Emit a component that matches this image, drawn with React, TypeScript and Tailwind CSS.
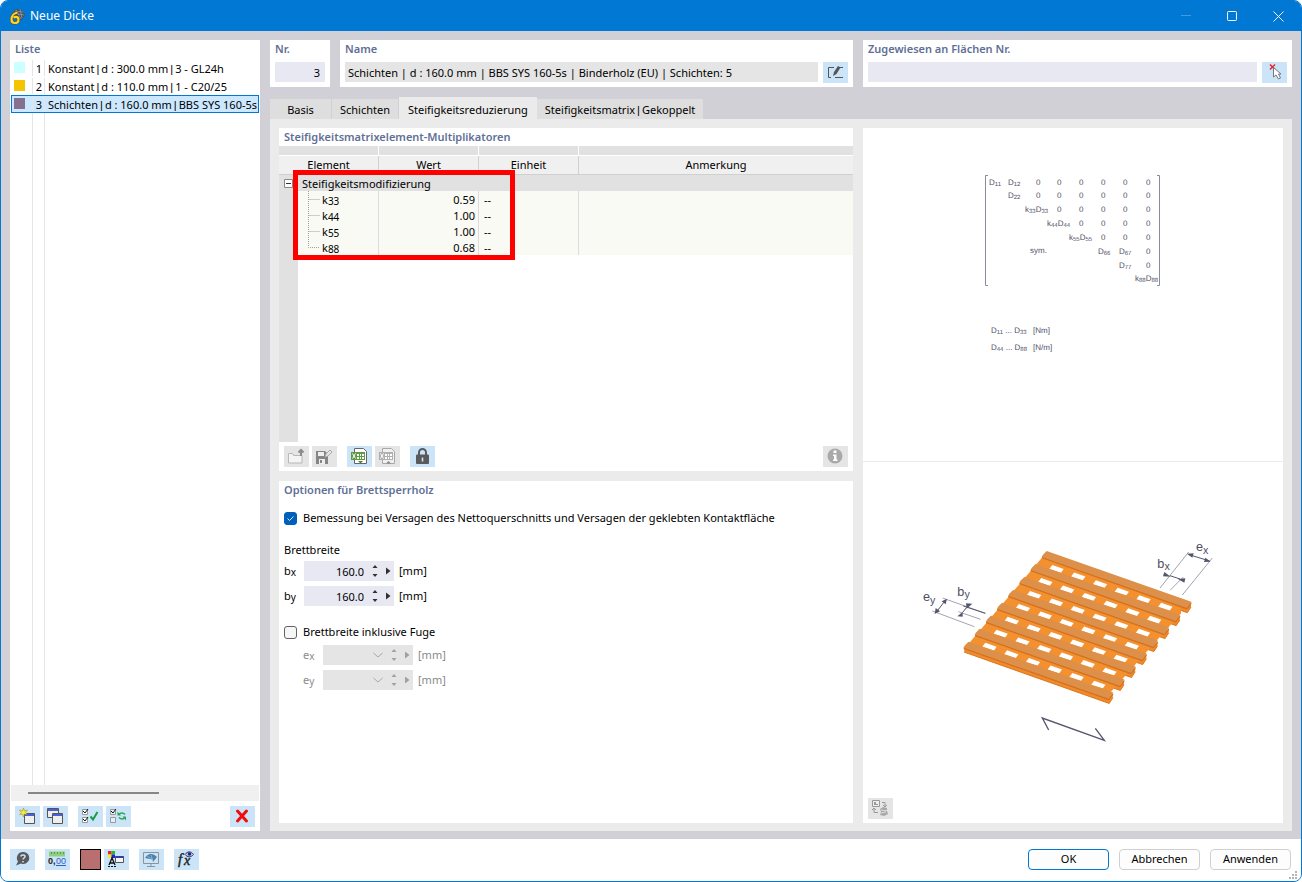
import React, { useState } from 'react';

const listItems = [
  { nr: 1, color: '#ccffff', parts: ['Konstant', 'd : 300.0 mm', '3 - GL24h'] },
  { nr: 2, color: '#f5c400', parts: ['Konstant', 'd : 110.0 mm', '1 - C20/25'] },
  { nr: 3, color: '#86708f', parts: ['Schichten', 'd : 160.0 mm', 'BBS SYS 160-5s', ''] },
];

const tabs = [['Basis'], ['Schichten'], ['Steifigkeitsreduzierung'], ['Steifigkeitsmatrix', 'Gekoppelt']];

const factors = [
  { index: '33', value: '0.59' },
  { index: '44', value: '1.00' },
  { index: '55', value: '1.00' },
  { index: '88', value: '0.68' },
];

// [x, baseline, label, subscript, label, subscript]
const matrixCells: [number, number, string, string?, string?, string?][] = [
  [126, 57, 'D', '11'],
  [145, 57, 'D', '12'],
  [145, 70, 'D', '22'],
  [162, 84, 'k', '33', 'D', '33'],
  [184, 98, 'k', '44', 'D', '44'],
  [206, 112, 'k', '55', 'D', '55'],
  [235, 126, 'D', '66'],
  [256, 126, 'D', '67'],
  [256, 140, 'D', '77'],
  [272, 153, 'k', '88', 'D', '88'],
];

const zeroColumns = [173, 194, 216, 238, 260, 283];
const zeroRows = [
  { y: 57, from: 0 },
  { y: 70, from: 0 },
  { y: 84, from: 1 },
  { y: 98, from: 2 },
  { y: 112, from: 3 },
  { y: 126, from: 5 },
  { y: 140, from: 5 },
];

/* ---------- Small building blocks ---------- */

interface IconButtonProps {
  label: string;
  disabled?: boolean;
  children: React.ReactNode;
}

const IconButton: React.FC<IconButtonProps> = ({ label, disabled, children }) => (
  <button
    type="button"
    aria-label={label}
    disabled={disabled}
    className="h-[21px] w-[25px] shrink-0 bg-[#cce4f7] hover:bg-[#b5d9f3] disabled:bg-[#e5e5e5]"
  >
    <svg width="25" height="21" viewBox="0 0 25 21" fill="none">{children}</svg>
  </button>
);

const Heading: React.FC<{ children: React.ReactNode }> = ({ children }) => (
  <h2 className="h-[18px] px-[5px] text-[11px] leading-[18px] font-semibold text-[#5f6f96]">{children}</h2>
);

// joins text parts with a narrow bar
const Piped: React.FC<{ parts: string[] }> = ({ parts }) => (
  <>
    {parts.map((part, i) => (
      <React.Fragment key={i}>
        {i > 0 && <span className="px-[2px] font-['Liberation_Sans',sans-serif] leading-none">|</span>}
        {part}
      </React.Fragment>
    ))}
  </>
);

interface TickBoxProps {
  id: string;
  label: string;
  checked: boolean;
  onChange: (value: boolean) => void;
}

const TickBox: React.FC<TickBoxProps> = ({ id, label, checked, onChange }) => (
  <div className="flex h-4 items-center gap-[6px]">
    <span className="relative flex">
      <input
        id={id}
        type="checkbox"
        checked={checked}
        onChange={(e) => onChange(e.target.checked)}
        className="h-[13px] w-[13px] appearance-none rounded-[3px] border border-[#626262] bg-[#f6f6f6] checked:border-[#005fb8] checked:bg-[#005fb8]"
      />
      {checked && (
        <svg className="pointer-events-none absolute inset-0" width="13" height="13" viewBox="0 0 13 13" fill="none">
          <path d="M3.5 6.5l2 2 4-4" stroke="#d5e6f5" />
        </svg>
      )}
    </span>
    <label htmlFor={id}>{label}</label>
  </div>
);

interface LengthFieldProps {
  id: string;
  name: string;
  axis: string;
  value?: string;
  disabled?: boolean;
}

const LengthField: React.FC<LengthFieldProps> = ({ id, name, axis, value = '', disabled = false }) => {
  const arrow = disabled ? '#a0a0a0' : '#303030';
  return (
    <div className={disabled ? 'flex h-5 items-center text-[#8a8a8a]' : 'flex h-5 items-center'}>
      <label htmlFor={id} className="w-5 leading-5">
        {name}
        <span className="align-[-1px] text-[10px] leading-none">{axis}</span>
      </label>
      <div className={disabled ? 'flex h-5 w-[90px] items-center bg-[#e5e5e5]' : 'flex h-5 w-[90px] items-center bg-[#e8e8f2]'}>
        <input
          id={id}
          type="text"
          defaultValue={value}
          disabled={disabled}
          className={disabled ? 'h-5 w-12 bg-transparent text-right' : 'h-5 w-[60px] bg-transparent text-right'}
        />
        {disabled && (
          <button type="button" aria-label="Auswählen" disabled className="h-5 w-3">
            <svg width="12" height="20" viewBox="0 0 12 20" fill="none">
              <path d="M2.5 8l4.500 4 4.500-4" stroke="#a8a8a8" />
            </svg>
          </button>
        )}
        <div className="flex flex-1 justify-end pr-px">
          <div className="flex flex-col">
            <button type="button" aria-label="Erhöhen" disabled={disabled} className="h-[10px] w-3">
              <svg width="12" height="10" viewBox="0 0 12 10"><path d="M3.500 7h5L6 4z" fill={arrow} /></svg>
            </button>
            <button type="button" aria-label="Verringern" disabled={disabled} className="h-[10px] w-3">
              <svg width="12" height="10" viewBox="0 0 12 10"><path d="M3.500 3h5L6 6z" fill={arrow} /></svg>
            </button>
          </div>
        </div>
        <button type="button" aria-label="Weitere" disabled={disabled} className="h-5 w-3">
          <svg width="12" height="20" viewBox="0 0 12 20"><path d="M4 6.500v7l4.500-3.500z" fill={arrow} /></svg>
        </button>
      </div>
      <span className="ml-[5px]">[mm]</span>
    </div>
  );
};

/* ---------- Drawings ---------- */

const MatrixDrawing = () => (
  <svg width="420" height="333" viewBox="0 0 420 333" fontFamily="'Liberation Sans', Arial, sans-serif" fontSize="8" fill="#505068" textRendering="geometricPrecision">
    <path d="M125 47.500h-2.500v110h2.500M294 47.500h2.500v110H294" fill="none" stroke="#8a8a9c" />
    {matrixCells.map(([x, y, a, subA, b, subB]) => (
      <text key={`${x}-${y}`} x={x} y={y}>
        {a}
        <tspan fontSize="6" dy="1">{subA}</tspan>
        {b && <tspan dy="-1">{b}</tspan>}
        {b && <tspan fontSize="6" dy="1">{subB}</tspan>}
      </text>
    ))}
    {zeroRows.map(({ y, from }) =>
      zeroColumns.slice(from).map((x) => <text key={`${x}-${y}`} x={x} y={y}>0</text>)
    )}
    <text x="167" y="125">sym.</text>
    <text x="128" y="205">D<tspan fontSize="6" dy="1">11</tspan><tspan dy="-1"> ... D</tspan><tspan fontSize="6" dy="1">33</tspan></text>
    <text x="170" y="205">[Nm]</text>
    <text x="128" y="222">D<tspan fontSize="6" dy="1">44</tspan><tspan dy="-1"> ... D</tspan><tspan fontSize="6" dy="1">88</tspan></text>
    <text x="170" y="222">[N/m]</text>
  </svg>
);

const BoardDrawing = () => {
  const rows = [0, 1, 2, 3, 4, 5, 6, 7];
  const holes = [0, 1, 2, 3, 4, 5];
  const shift = (i: number) => `translate(${-33.5 * i} ${38.9 * i})`;
  return (
    <svg width="346" height="220" viewBox="0 0 1038 660" fontFamily="'Liberation Sans', Arial, sans-serif">
      {/* bottom layer */}
      {rows.map((i) => (
        <g key={i} transform={shift(i)}>
          <path d="M427 82L440 70L873 222V231L862 248L427 94z" fill="#f08a2c" />
          <path d="M427 94L862 248L873 231" fill="none" stroke="#dc771c" strokeWidth="3" />
        </g>
      ))}
      {/* cross layer */}
      <path d="M427 82L844 232L843 250L613 508L223 368L198 350z" fill="#f39130" />
      {rows.slice(0, 7).map((i) => (
        <g key={i} transform={shift(i)}>
          {holes.map((j) => (
            <path key={j} transform={`translate(${65.3 * j} ${22.7 * j})`} d="M457 105L491 117L483 128L448 117z" fill="#fff" />
          ))}
        </g>
      ))}
      {/* top layer */}
      {rows.map((i) => (
        <g key={i} transform={shift(i)}>
          <path d="M426 80L861 231L874 216V222L861 239L426 85z" fill="#e07a20" />
          <path d="M440 63L874 215L861 235L425 81L429 74z" fill="#dd9049" />
          <path d="M426 83L861 236L873 221" fill="none" stroke="#d4711f" strokeWidth="3" />
        </g>
      ))}
      {/* dimension lines */}
      <g stroke="#74748a" strokeWidth="2">
        <path d="M128 204L256 250M97 243L223 290M175 245L242 268M866 66L780 174M937 84L847 195M850 141L810 181" />
      </g>
      <g stroke="#55556e" strokeWidth="3">
        <path d="M190 228L256 250M136 211L108 248M200 232L188 247M864 73L929 93M810 137L840 147" />
      </g>
      <g fill="#55556e">
        <path d="M141 206l-16 8 12 9zM104 252l3-18 13 10zM200 236l-2-16 19 1zM188 246l-16 13 16 1z" />
        <path d="M861 71l20-1-4 13zM932 95l-20 1 4-13zM812 140l-23-1 4-13zM834 147l22-2-3 13z" />
      </g>
      <g fill="none" stroke="#55556e" strokeWidth="4">
        <path d="M446 600L427 564L613 631L586 595" />
      </g>
      <g fill="#4d4d66" fontSize="38">
        <text x="69" y="212">e<tspan fontSize="32" dy="9">y</tspan></text>
        <text x="172" y="197">b<tspan fontSize="32" dy="7">y</tspan></text>
        <text x="772" y="113">b<tspan fontSize="32" dy="8">x</tspan></text>
        <text x="888" y="62">e<tspan fontSize="32" dy="9">x</tspan></text>
      </g>
    </svg>
  );
};

/* ---------- Window ---------- */

const App: React.FC = () => {
  const [activeTab, setActiveTab] = useState(2);
  const [selected, setSelected] = useState(3);
  const [netSection, setNetSection] = useState(true);
  const [withGap, setWithGap] = useState(false);

  return (
    <div className="flex min-h-screen flex-col overflow-hidden rounded-lg border border-[#0078d4] bg-[#d1d0d6] font-['Noto_Sans',sans-serif] text-[11px] text-black">
      {/* Title bar */}
      <header className="flex h-[30px] items-center bg-[#0078d4] pl-2 text-white">
        <svg width="17" height="17" viewBox="0 0 17 17" fill="none">
          <path d="M3 6C5 1 9 0 13 2l3 5-4 6-3-5-6 1z" fill="#47515e" />
          <path d="M4 5l11 2M6 3l8 1M7 2l5 9M11 1l2 9" stroke="#93a5b8" strokeWidth=".7" />
          <path d="M8.500 4.500C5 5 2.500 8 2.500 11.500c0 2.200 1.200 3.500 3.200 3.500 2.300 0 3.800-1.600 3.800-3.600 0-1.600-1-2.600-2.500-2.600-1 0-1.800.4-2.300 1" stroke="#5e4c08" strokeWidth="3.200" />
          <path d="M8.500 4.500C5 5 2.500 8 2.500 11.500c0 2.200 1.200 3.500 3.200 3.500 2.300 0 3.800-1.600 3.800-3.600 0-1.600-1-2.600-2.500-2.600-1 0-1.800.4-2.300 1" stroke="#ffd42a" strokeWidth="2.200" />
        </svg>
        <h1 className="ml-1 flex-1 text-xs">Neue Dicke</h1>
        <button type="button" aria-label="Minimieren" className="grid h-[30px] w-[46px] place-items-center">
          <svg width="10" height="10" viewBox="0 0 10 10"><path d="M0 4.500h10" stroke="#3f9be4" /></svg>
        </button>
        <button type="button" aria-label="Maximieren" className="grid h-[30px] w-[46px] place-items-center">
          <svg width="10" height="10" viewBox="0 0 10 10" fill="none"><rect x=".5" y=".5" width="9" height="9" rx="1" stroke="#fff" /></svg>
        </button>
        <button type="button" aria-label="Schließen" className="grid h-[30px] w-[46px] place-items-center">
          <svg width="11" height="11" viewBox="0 0 11 11"><path d="M.5.5l10 10M10.500.5l-10 10" stroke="#fff" /></svg>
        </button>
      </header>

      <main className="flex flex-1 gap-[10px] px-[9px] pt-[9px] pb-2">
        {/* List */}
        <aside className="flex w-[250px] shrink-0 flex-col bg-white">
          <Heading>Liste</Heading>
          <div className="flex flex-1 flex-col px-px pt-px">
            <ul>
              {listItems.map((item) => (
                <li key={item.nr}>
                  <button
                    type="button"
                    onClick={() => setSelected(item.nr)}
                    className={
                      item.nr === selected
                        ? 'flex h-[18px] w-full overflow-hidden border border-[#0078d4] bg-[#cce8ff] text-left leading-[18px]'
                        : 'flex h-[18px] w-full overflow-hidden border border-transparent text-left leading-[18px]'
                    }
                  >
                    <span className="flex h-full w-[21px] shrink-0 border-r border-[#e5e5e5] pt-[2px] pl-[2px]">
                      <span className="h-[11px] w-[11px]" style={{ backgroundColor: item.color }}></span>
                    </span>
                    <span className="h-full w-3 shrink-0 border-r border-[#e5e5e5] pr-[2px] text-right">{item.nr}</span>
                    <span className="min-w-0 pl-[3px] whitespace-nowrap"><Piped parts={item.parts} /></span>
                  </button>
                </li>
              ))}
            </ul>
            <div className="flex flex-1">
              <div className="w-[22px] border-r border-[#e5e5e5]"></div>
              <div className="w-3 border-r border-[#e5e5e5]"></div>
            </div>
            <div className="flex h-4 items-center bg-[#f0f0f0] pl-[17px]">
              <div className="h-[2px] w-[131px] bg-[#868686]"></div>
            </div>
          </div>
          <div className="flex px-[5px] pt-[5px] pb-1">
            <div className="flex flex-1 gap-[10px]">
              <div className="flex gap-[3px]">
                <IconButton label="Neu">
                  <path d="M9.500 7.500h10v10h-10z" fill="#f0f0f0" stroke="#555" />
                  <path d="M10 8h9v2h-9z" fill="#4a5fe0" />
                  <path d="M8.500 2l1 3 3-1-2 2.500 2 2-3-.5-1 3-1-3-3 .5 2-2-2-2.500 3 1z" fill="#ffee30" stroke="#8c8520" strokeWidth=".5" />
                </IconButton>
                <IconButton label="Kopieren">
                  <path d="M4.500 2.500h11v9h-11z" fill="#eee" stroke="#555" />
                  <path d="M5 3h10v2H5z" fill="#4a5fe0" />
                  <path d="M9.500 7.500h10v10h-10z" fill="#eee" stroke="#555" />
                  <path d="M10 8h9v2h-9z" fill="#4a5fe0" />
                </IconButton>
              </div>
              <div className="flex gap-[3px]">
                <IconButton label="Alle auswählen">
                  <path d="M4.500 3.500h5v5h-5zM4.500 11.500h5v5h-5z" fill="#fff" stroke="#999" />
                  <path d="M5 5l2 2 3-4M5 13l2 2 3-4" stroke="#111" />
                  <path d="M12.500 10.500l2.500 3 4.500-7.500" stroke="#15a045" strokeWidth="2" />
                </IconButton>
                <IconButton label="Auswahl umkehren">
                  <path d="M4.500 3.500h5v5h-5zM4.500 11.500h5v5h-5z" fill="#e8eef4" stroke="#999" />
                  <path d="M5 5l2 2 3-4" stroke="#111" />
                  <path d="M13 8.500c1.500-2 4-2 6 0M19 11.500c-1.500 2-4 2-6 0" stroke="#27a45a" strokeWidth="1.600" />
                  <path d="M11.500 5.500v4h3.500zM20 14.500v-4h-3.500z" fill="#27a45a" />
                </IconButton>
              </div>
            </div>
            <IconButton label="Löschen">
              <path d="M7.500 5l9 10M16.500 5l-9 10" stroke="#f20d0d" strokeWidth="3" strokeLinecap="round" />
            </IconButton>
          </div>
        </aside>

        <div className="flex min-w-0 flex-1 flex-col">
          {/* Number, name and assignment */}
          <div className="flex gap-[10px]">
            <section className="h-[47px] w-[60px] shrink-0 bg-white">
              <Heading><label htmlFor="nr">Nr.</label></Heading>
              <div className="mt-1 px-[5px]">
                <input id="nr" defaultValue="3" className="h-5 w-full bg-[#e8e8f2] pr-[5px] text-right" />
              </div>
            </section>
            <section className="h-[47px] min-w-0 flex-1 bg-white">
              <Heading><label htmlFor="name">Name</label></Heading>
              <div className="mt-1 flex gap-[5px] px-[5px]">
                <input
                  id="name"
                  readOnly
                  value="Schichten | d : 160.0 mm | BBS SYS 160-5s | Binderholz (EU) | Schichten: 5"
                  className="h-5 min-w-0 flex-1 bg-[#e5e5e5] px-[3px]"
                />
                <IconButton label="Name bearbeiten">
                  <path d="M11 5.500H5.500v10H8M12 15.500h8M17 5.500h3" stroke="#555" />
                  <path d="M10 14l1-4 4-6 2.500 1.500-4 6.500z" fill="#555" />
                </IconButton>
              </div>
            </section>
            <section className="h-[47px] w-[429px] shrink-0 bg-white">
              <Heading><label htmlFor="assigned">Zugewiesen an Flächen Nr.</label></Heading>
              <div className="mt-1 flex gap-[5px] px-[5px]">
                <input id="assigned" className="h-5 min-w-0 flex-1 bg-[#e8e8f2] px-[3px]" />
                <IconButton label="Flächen auswählen">
                  <path d="M8 2.500l5 5M13 2.500l-5 5" stroke="#e8202a" strokeWidth="1.400" />
                  <path d="M11.500 5.500v9.500l2.500-2 2.500 4 2-1-2-4h2.500z" fill="#fff" stroke="#777" />
                </IconButton>
              </div>
            </section>
          </div>

          {/* Tabs */}
          <div role="tablist" className="mt-[10px] flex h-[22px] items-end">
            {tabs.map((parts, i) => (
              <button
                key={parts[0]}
                type="button"
                role="tab"
                aria-selected={i === activeTab}
                onClick={() => setActiveTab(i)}
                className={
                  i === activeTab
                    ? 'h-[22px] min-w-[62px] bg-[#ebebeb] px-[9px] pt-1 whitespace-nowrap'
                    : 'h-5 min-w-[62px] border-r border-[#d1d0d6] bg-[#dedede] px-2 pt-[2px] whitespace-nowrap'
                }
              >
                <Piped parts={parts} />
              </button>
            ))}
          </div>

          <div className="flex flex-1 gap-[10px] bg-[#ebebeb] px-[9px] pt-[9px] pb-2">
            <div className="flex min-w-0 flex-1 flex-col gap-[10px]">
              {/* Multipliers */}
              <section className="flex h-[343px] flex-col bg-white">
                <Heading>Steifigkeitsmatrixelement-Multiplikatoren</Heading>
                <div className="relative flex flex-1 flex-col">
                  <table className="w-full table-fixed border-separate border-spacing-0">
                    <colgroup>
                      <col className="w-[19px]" />
                      <col className="w-[81px]" />
                      <col className="w-[100px]" />
                      <col className="w-[100px]" />
                      <col />
                    </colgroup>
                    <thead>
                      <tr className="h-[10px] bg-[#e1e1e1]">
                        <td colSpan={2} className="border-r border-b border-white"></td>
                        <td className="border-r border-b border-white"></td>
                        <td className="border-r border-b border-white"></td>
                        <td className="border-b border-white"></td>
                      </tr>
                      <tr className="h-[19px] bg-[#f0f0f0] leading-[18px]">
                        <th colSpan={2} className="border-r border-b border-[#d0d0d0] p-0 font-normal">Element</th>
                        <th className="border-r border-b border-[#d0d0d0] p-0 font-normal">Wert</th>
                        <th className="border-r border-b border-[#d0d0d0] p-0 font-normal">Einheit</th>
                        <th className="border-b border-[#d0d0d0] p-0 font-normal">Anmerkung</th>
                      </tr>
                    </thead>
                    <tbody>
                      <tr className="h-4 bg-[#e1e1e1] leading-[14px]">
                        <td className="p-0 pl-[5px]">
                          <button type="button" aria-label="Gruppe zuklappen" className="flex">
                            <svg width="9" height="9" viewBox="0 0 9 9"><path d="M.5.5h8v8h-8z" fill="#fff" stroke="#888" /><path d="M2 4.500h5" stroke="#333" /></svg>
                          </button>
                        </td>
                        <td colSpan={4} className="p-0 pt-[2px] pl-1">Steifigkeitsmodifizierung</td>
                      </tr>
                      {factors.map((factor, i) => (
                        <tr key={factor.index} className="h-4 bg-[#f9faf4] leading-[14px]">
                          <td className="bg-[#e1e1e1] p-0"></td>
                          <td className="border-r border-[#dcdcdc] p-0 pl-[10px]">
                            <div className="flex h-4">
                              <svg width="14" height="16" viewBox="0 0 14 16">
                                <path d={i === factors.length - 1 ? 'M.5 0v8.500h11' : 'M.5 0v16M.5 8.500h11'} fill="none" stroke="#a0a0a0" strokeDasharray="1 1" />
                              </svg>
                              <span className="pt-[2px]">k<span className="align-[-1px] text-[10px] leading-none">{factor.index}</span></span>
                            </div>
                          </td>
                          <td className="border-r border-[#dcdcdc] p-0 pt-[2px] pr-[3px] text-right">{factor.value}</td>
                          <td className="border-r border-[#dcdcdc] p-0 pt-[2px] pl-[5px]">--</td>
                          <td className="p-0"></td>
                        </tr>
                      ))}
                    </tbody>
                  </table>
                  <div className="w-[19px] flex-1 bg-[#e1e1e1]"></div>
                  {/* highlight frame over the factor rows */}
                  <div className="pointer-events-none absolute top-6 left-[14px] h-[90px] w-[222px] border-5 border-[#ff0000]"></div>
                </div>
                <div className="flex gap-[10px] px-[5px] py-1">
                  <div className="flex gap-[3px]">
                    <IconButton label="Importieren" disabled>
                      <path d="M4.500 17V7.500h4l1 2h8.500v7.500z" fill="#f4f4f4" stroke="#b8b8b8" />
                      <path d="M17 10V4M14.500 6.500L17 4l2.500 2.500" stroke="#8c8c8c" strokeWidth="2" />
                    </IconButton>
                    <IconButton label="Speichern" disabled>
                      <path d="M4 5h9l3 3v10H4z" fill="#858585" />
                      <path d="M6 6h6v4H6zM7 13h6v5H7z" fill="#eee" />
                      <path d="M8 14h2v3H8z" fill="#858585" />
                      <path d="M13 11l1-3 4-4 2 2-4 4z" fill="#e5e5e5" stroke="#aaa" />
                    </IconButton>
                  </div>
                  <div className="flex gap-[3px]">
                    <IconButton label="Excel-Export">
                      <path d="M7.500 2.500h9l3 3v12h-12z" fill="#fff" stroke="#666" />
                      <path d="M4 6h14v8H4z" fill="#5f9a45" />
                      <path d="M5.500 7.500l3 5M8.500 7.500l-3 5" stroke="#fff" />
                      <path d="M10 8h7v5h-7z" fill="#fff" />
                      <path d="M12.500 8v5M14.500 8v5M10 10.500h7" stroke="#5f9a45" />
                      <path d="M11 15h5l-2.500 2.500z" fill="#3d8b2c" />
                    </IconButton>
                    <IconButton label="Excel-Import" disabled>
                      <path d="M7.500 2.500h9l3 3v12h-12z" fill="#f0f0f0" stroke="#a8a8a8" />
                      <path d="M4 6h14v8H4z" fill="#b0b0b0" />
                      <path d="M5.500 7.500l3 5M8.500 7.500l-3 5" stroke="#fff" />
                      <path d="M10 8h7v5h-7z" fill="#fff" />
                      <path d="M12.500 8v5M14.500 8v5M10 10.500h7" stroke="#b0b0b0" />
                      <path d="M11 17.500h5L13.500 15z" fill="#888" />
                    </IconButton>
                  </div>
                  <div className="flex flex-1">
                    <IconButton label="Sperren">
                      <path d="M9 9V6.500a3.500 3.500 0 017 0V9" stroke="#5a5a5a" strokeWidth="2" />
                      <rect x="6" y="8.500" width="13" height="9.500" rx="1" fill="#5a5a5a" />
                      <path d="M12.500 11.500v4" stroke="#cce4f7" strokeWidth="1.600" />
                    </IconButton>
                  </div>
                  <IconButton label="Info" disabled>
                    <circle cx="12" cy="10" r="7.500" fill="#a9a9a9" />
                    <path d="M10.500 4.500h3V7h-3zM10 8.500h3.500v5h1v1.500H10v-1.500h1V10h-1z" fill="#fff" />
                  </IconButton>
                </div>
              </section>

              {/* Options */}
              <section className="flex-1 bg-white">
                <Heading>Optionen für Brettsperrholz</Heading>
                <div className="px-[5px] pt-[11px]">
                  <TickBox
                    id="net-section"
                    label="Bemessung bei Versagen des Nettoquerschnitts und Versagen der geklebten Kontaktfläche"
                    checked={netSection}
                    onChange={setNetSection}
                  />
                  <h3 className="mt-4 leading-4">Brettbreite</h3>
                  <div className="mt-[3px] flex flex-col gap-[5px]">
                    <LengthField id="bx" name="b" axis="x" value="160.0" />
                    <LengthField id="by" name="b" axis="y" value="160.0" />
                  </div>
                  <div className="mt-[18px]">
                    <TickBox id="with-gap" label="Brettbreite inklusive Fuge" checked={withGap} onChange={setWithGap} />
                  </div>
                  <div className="mt-[5px] ml-[19px] flex flex-col gap-[5px]">
                    <LengthField id="ex" name="e" axis="x" disabled={!withGap} />
                    <LengthField id="ey" name="e" axis="y" disabled={!withGap} />
                  </div>
                </div>
              </section>
            </div>

            {/* Graphics */}
            <section className="flex w-[420px] shrink-0 flex-col bg-white">
              <div className="flex h-[334px] justify-center border-b border-[#ebebeb]">
                <MatrixDrawing />
              </div>
              <div className="flex flex-1 flex-col items-center pt-[68px]">
                <BoardDrawing />
              </div>
              <div className="flex px-[5px] pb-1">
                <IconButton label="Grafik wechseln" disabled>
                  <path d="M4.500 2.500h7v6h-7z" fill="#eee" stroke="#999" />
                  <path d="M6 4h2v3H6zM8 6h2v1H8z" fill="#999" />
                  <path d="M14 4.500h3V9M15 7l2 2 2-2M10 14.500H6V10M4 12l2-2 2 2" stroke="#999" />
                  <path d="M12 11l3-2 4 1v2l-3 1h3l1 3-4 2-4-1 1-3z" fill="#a8a8a8" />
                  <path d="M13 12l5 1M13 15l5-1" stroke="#ddd" />
                </IconButton>
              </div>
            </section>
          </div>
        </div>
      </main>

      {/* Footer */}
      <footer className="relative flex h-[42px] items-start bg-white pt-[10px] pr-[10px] pl-[9px]">
        <div className="flex flex-1 gap-[10px]">
          <IconButton label="Hilfe">
            <path d="M13 3a6 6 0 11-2 11.500l-5 2 2-4A6 6 0 0113 3z" fill="#5a5a5a" />
            <path d="M11 7.500c0-2 4-2 4 0 0 1.500-2 1.500-2 3M13 12v1.500" stroke="#cce4f7" strokeWidth="1.500" />
          </IconButton>
          <IconButton label="Einheiten">
            <path d="M4 2.500h16v5H4z" fill="#8fd07c" />
            <path d="M6.500 3v2M9.500 3v2M12.500 3v2M15.500 3v2M18.500 3v2" stroke="#579a48" />
            <text x="3" y="15" fontSize="9" fontFamily="Liberation Sans, sans-serif" fontWeight="700" fill="#222">0,</text>
            <text x="11" y="15" fontSize="9" fontFamily="Liberation Sans, sans-serif" fill="#2e62c8">00</text>
            <path d="M11 16.500h10" stroke="#2e62c8" />
          </IconButton>
          <div className="flex gap-[3px]">
            <button type="button" aria-label="Farbe" className="h-[21px] w-[21px] border border-black bg-[#b96f6f]"></button>
            <IconButton label="Darstellung">
              <path d="M4 2h3.500v3.500H4z" fill="#e22" />
              <path d="M7.500 2H11v3.500H7.500z" fill="#2b2" />
              <path d="M4 5.500h3.500V9H4z" fill="#ee2" />
              <path d="M7.500 5.500H11V9H7.500z" fill="#22d" />
              <path d="M5 16l3-7 3 7M6 14h4" stroke="#111" strokeWidth="1.300" />
              <path d="M4 17.500h8" stroke="#111" strokeDasharray="2 1" />
              <path d="M11.500 7.500h8v6h-8z" fill="#f4f4f4" stroke="#555" />
              <path d="M11.500 7h8v2h-8z" fill="#333ca0" />
            </IconButton>
          </div>
          <IconButton label="Ansicht">
            <path d="M4.500 3.500h15v11h-15zM12 15v2.500M8 17.500h8" stroke="#8a949c" />
            <path d="M6 9c3-5 8-5 12-1l-4 5c0-2-1-3-3-3z" fill="#4f81ae" />
            <path d="M8 7l5 3M12 6l2 6" stroke="#a5c2da" strokeWidth=".7" />
          </IconButton>
          <IconButton label="Formel">
            <text x="4" y="15" fontSize="15" fontFamily="Liberation Serif, serif" fontStyle="italic" fill="#222" stroke="#222" strokeWidth=".4">f</text>
            <text x="10" y="16" fontSize="14" fontFamily="Liberation Serif, serif" fontStyle="italic" fill="#222" stroke="#222" strokeWidth=".4">x</text>
            <path d="M11 5.500c2.500-3.500 6-3.500 8.500 0-2.500 3-6 3-8.500 0z" fill="#c9cdf0" stroke="#2a2f66" />
            <circle cx="15.500" cy="5" r="1.800" fill="#23296b" />
          </IconButton>
        </div>
        <div className="flex gap-[10px]">
          <button type="button" className="h-[21px] w-[81px] rounded-[4px] border border-[#0078d4] bg-[#fdfdfd]">OK</button>
          <button type="button" className="h-[21px] w-[81px] rounded-[4px] border border-[#d0d0d0] bg-[#fdfdfd]">Abbrechen</button>
          <button type="button" className="h-[21px] w-[81px] rounded-[4px] border border-[#d0d0d0] bg-[#fdfdfd]">Anwenden</button>
        </div>
        {/* resize grip */}
        <svg className="absolute right-1 bottom-[2px]" width="8" height="8" viewBox="0 0 8 8" fill="#b5b5b5">
          <path d="M6 0h2v2H6zM3 3h2v2H3zM6 3h2v2H6zM0 6h2v2H0zM3 6h2v2H3zM6 6h2v2H6z" />
        </svg>
      </footer>
    </div>
  );
};

export default App;
